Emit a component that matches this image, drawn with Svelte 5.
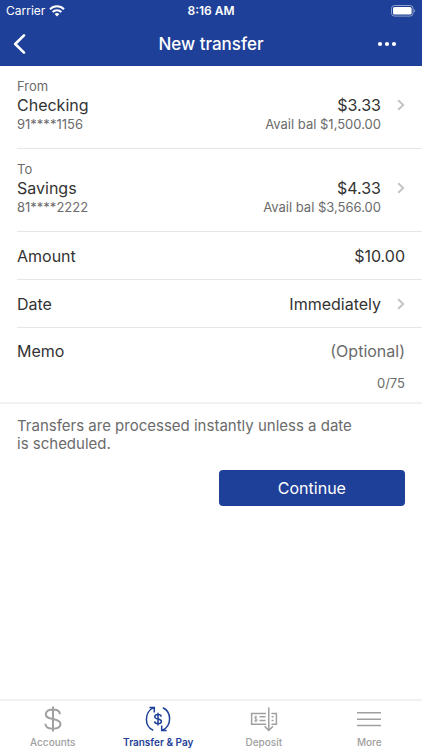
<script lang="ts">
	interface Account {
		label: string;
		name: string;
		number: string;
		balance: string;
		available: string;
	}

	const accounts: Account[] = [
		{ label: 'From', name: 'Checking', number: '91****1156', balance: '$3.33', available: '$1,500.00' },
		{ label: 'To', name: 'Savings', number: '81****2222', balance: '$4.33', available: '$3,566.00' }
	];

	const tabs = ['Accounts', 'Transfer & Pay', 'Deposit', 'More'];
	const memoLimit = 75;

	let activeTab = 'Transfer & Pay';
	let amount = '$10.00';
	let memo = '';
</script>

{#snippet chevron()}
	<svg class="chevron" width="8" height="14" viewBox="0 0 8 14" aria-hidden="true">
		<path d="M1.2 2.2 6.2 7 1.2 11.8" />
	</svg>
{/snippet}

<div class="screen">
	<header>
		<div class="status">
			<span class="carrier">
				Carrier
				<svg width="16" height="12" viewBox="0 0 16 12" fill="none" stroke="#fff" aria-hidden="true">
					<path d="M1 4.2a10 10 0 0 1 14 0" stroke-width="2" />
					<path d="M3.6 7a6.3 6.3 0 0 1 8.8 0" stroke-width="2" />
					<path d="M5.6 9.1a3.5 3.5 0 0 1 4.8 0L8 11.6z" fill="#fff" stroke="none" />
				</svg>
			</span>
			<span class="time">8:16 AM</span>
			<svg class="battery" width="25" height="12" viewBox="0 0 25 12" aria-hidden="true">
				<rect x=".5" y=".5" width="21.6" height="10.6" rx="3" fill="none" stroke="#8fa0cc" />
				<rect x="2" y="2" width="18.6" height="7.6" rx="1.6" fill="#fff" />
				<path d="M23.3 4c1.3.6 1.3 3 0 3.6z" fill="#8fa0cc" />
			</svg>
		</div>
		<div class="titlebar">
			<button class="back" aria-label="Back">
				<svg width="13" height="20" viewBox="0 0 13 20" aria-hidden="true">
					<path d="M11 1.4 2.2 10l8.8 8.6" fill="none" stroke="#fff" stroke-width="2.6" stroke-linecap="round" stroke-linejoin="round" />
				</svg>
			</button>
			<h1>New transfer</h1>
			<button class="options" aria-label="Options">
				<svg width="20" height="6" viewBox="0 0 20 6" fill="#fff" aria-hidden="true">
					<circle cx="3" cy="3" r="2.1" />
					<circle cx="10" cy="3" r="2.1" />
					<circle cx="17" cy="3" r="2.1" />
				</svg>
			</button>
		</div>
	</header>

	<main>
		<div class="form">
			{#each accounts as account}
				<button class="row account">
					<span class="details">
						<span class="small">{account.label}</span>
						<span>{account.name}</span>
						<span class="small">{account.number}</span>
					</span>
					<span class="details right">
						<span>{account.balance}</span>
						<span class="small">Avail bal {account.available}</span>
					</span>
					{@render chevron()}
				</button>
			{/each}
			<div class="row">
				<label for="amount">Amount</label>
				<input id="amount" type="text" inputmode="decimal" bind:value={amount} />
			</div>
			<button class="row">
				<span>Date</span>
				<span class="right">Immediately</span>
				{@render chevron()}
			</button>
			<div class="row memo">
				<label for="memo">Memo</label>
				<input id="memo" type="text" placeholder="(Optional)" maxlength={memoLimit} bind:value={memo} />
			</div>
			<div class="small count">{memo.length}/{memoLimit}</div>
		</div>

		<div class="footer">
			<p>Transfers are processed instantly unless a date is scheduled.</p>
			<button class="continue">Continue</button>
		</div>
	</main>

	<nav>
		{#each tabs as tab}
			<button class="tab" class:active={activeTab === tab} on:click={() => (activeTab = tab)}>
				<svg width="28" height="28" viewBox="0 0 28 28" aria-hidden="true">
					{#if tab === 'Accounts'}
						<path stroke-width="2" d="M14 1.4v25.2M21 9.2C20.8 6 18 4.4 14 4.4S6.8 6.3 6.8 9.2c0 3.2 3 4 7.2 4.9s7.5 1.8 7.5 5c0 3.1-3.2 4.7-7.5 4.7s-7.5-1.7-7.7-5" />
					{:else if tab === 'Transfer & Pay'}
						<path d="M9.2 25.2C4.9 23.4 2.4 19 2.4 14.2S5 4.6 9.6 2.9M5.4 2.5h4.9v4.9M18.8 2.8c4.3 1.8 6.8 6.2 6.8 11s-2.6 9.6-7.2 11.3M22.6 25.5h-4.9v-4.9" />
						<path d="M14 7.8v12.6M17.3 11.6c-.2-1.4-1.5-2.1-3.3-2.1s-3.2.8-3.2 2.2c0 1.5 1.4 1.9 3.2 2.3s3.4.9 3.4 2.4-1.5 2.3-3.4 2.3-3.3-.9-3.5-2.3" />
					{:else if tab === 'Deposit'}
						<path d="M16 8.5H1.6v10.8H16M21.5 8.5h4.9v10.8h-4.9M18.8 2.5v22.8M14.6 21.3l4.2 4.2 4.2-4.2M9.5 11.8h6M9.5 15.5h6M21.6 11.8h2M21.6 15.5h2" />
						<path stroke-width="1" d="M5.8 10.6v6.6M7.2 12.2c-.5-.8-2.7-.8-2.7.5 0 1.4 2.8.9 2.8 2.4 0 1.3-2.3 1.3-2.9.4" />
					{:else}
						<path d="M2 7.8h24M2 14.2h24M2 20.6h24" />
					{/if}
				</svg>
				{tab}
			</button>
		{/each}
	</nav>
</div>

<style>
	:global(body) {
		margin: 0;
		background: #fff;
	}

	.screen {
		display: flex;
		flex-direction: column;
		min-height: 100vh;
		font-family: Inter, 'Liberation Sans', sans-serif;
		font-size: 16px;
		line-height: 20px;
		color: #333;
	}

	button,
	input {
		margin: 0;
		padding: 0;
		border: 0;
		background: none;
		font: inherit;
		color: inherit;
	}

	button {
		cursor: pointer;
	}

	svg {
		display: block;
		flex: none;
	}

	header {
		background: #1f4098;
		color: #fff;
	}

	.status,
	.titlebar {
		display: grid;
		grid-template-columns: 1fr auto 1fr;
		align-items: center;
	}

	.status {
		height: 22px;
		padding: 0 6px;
		font-size: 12px;
	}

	.carrier {
		display: flex;
		align-items: center;
		gap: 4px;
	}

	.time {
		font-weight: 600;
	}

	.battery {
		justify-self: end;
	}

	.titlebar {
		height: 44px;
		padding: 0 13px;
	}

	.back {
		justify-self: start;
	}

	.options {
		justify-self: end;
		padding: 8px 12px;
	}

	h1 {
		margin: 0;
		font-size: 17px;
		font-weight: 500;
	}

	main {
		flex: 1;
	}

	.form {
		padding-left: 17px;
		border-bottom: 2px solid #f1f1f1;
	}

	.row {
		display: flex;
		align-items: center;
		box-sizing: border-box;
		width: 100%;
		min-height: 48px;
		padding-right: 17px;
		border-bottom: 1px solid #e6e6e6;
		text-align: left;
	}

	.account {
		min-height: 83px;
		padding-bottom: 4px;
	}

	.details {
		display: flex;
		flex-direction: column;
	}

	.account .right {
		padding-top: 18px;
	}

	.right {
		flex: 1;
		text-align: right;
	}

	.small {
		font-size: 13px;
		line-height: 18px;
		color: #6b6b6b;
	}

	.chevron {
		margin-left: 16px;
		fill: none;
		stroke: #c4c4c4;
		stroke-width: 2;
	}

	input {
		flex: 1;
		min-width: 0;
		text-align: right;
	}

	input::placeholder {
		color: #6b6b6b;
		opacity: 1;
	}

	.memo {
		min-height: 46px;
		border-bottom: 0;
	}

	.count {
		padding: 0 17px 10px 0;
		text-align: right;
	}

	.footer {
		display: flex;
		flex-direction: column;
		padding: 13px 17px;
	}

	p {
		max-width: 340px;
		margin: 0 0 17px;
		font-size: 15px;
		line-height: 18px;
		color: #6b6b6b;
	}

	.continue {
		align-self: flex-end;
		width: 48%;
		height: 36px;
		border-radius: 4px;
		background: #1f4098;
		color: #fff;
	}

	nav {
		display: grid;
		grid-template-columns: repeat(4, 1fr);
		border-top: 2px solid #f1f1f1;
	}

	.tab {
		display: flex;
		flex-direction: column;
		align-items: center;
		gap: 1px;
		padding-top: 4px;
		font-size: 10px;
		line-height: 16px;
		font-weight: 500;
		color: #a0a0a0;
	}

	.tab svg {
		fill: none;
		stroke: currentColor;
		stroke-width: 1.5;
	}

	.tab.active {
		font-weight: 600;
		color: #1f4098;
	}
</style>
